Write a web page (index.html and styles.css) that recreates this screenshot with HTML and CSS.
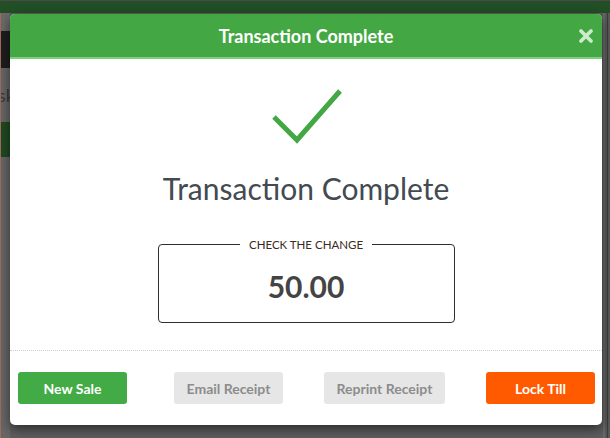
FILE: index.html
```html
<!DOCTYPE html>
<html>
<head>
<meta charset="utf-8">
<link rel="stylesheet" href="styles.css">
</head>
<body>
<div class="page">
  <div class="topbar"></div>
  <div class="side">
    <div class="s s1"></div>
    <div class="s s2"></div>
    <div class="s s3"><span>sk</span></div>
    <div class="s s4"></div>
    <div class="s s5"></div>
  </div>
  <div class="rightbar"></div>
</div>
<div class="overlay">
  <div class="dialog">
    <div class="dlg-head">
      <h1 class="dlg-title">Transaction Complete</h1>
      <svg class="close" width="14" height="14" viewBox="0 0 14 14">
        <path d="M2 2 L12 12 M12 2 L2 12" stroke="#cdeccd" stroke-width="3.6" stroke-linecap="round"/>
      </svg>
    </div>
    <div class="dlg-body">
      <svg class="check" width="72" height="58" viewBox="0 0 72 58">
        <path d="M3 30 L26 53 L69 4" fill="none" stroke="#43a843" stroke-width="5"/>
      </svg>
      <h2 class="done">Transaction Complete</h2>
      <fieldset class="change">
        <legend>CHECK THE CHANGE</legend>
        <div class="amount">50.00</div>
      </fieldset>
    </div>
    <div class="dlg-foot">
      <button class="btn green">New Sale</button>
      <button class="btn grey gap1">Email Receipt</button>
      <button class="btn grey wide gap2">Reprint Receipt</button>
      <button class="btn orange gap2">Lock Till</button>
    </div>
  </div>
</div>
</body>
</html>
```
FILE: styles.css
```css
html, body {
  margin: 0;
  padding: 0;
}
body {
  width: 610px;
  height: 438px;
  overflow: hidden;
  background: #5e5e5e;
  font-family: Lato, "Open Sans", sans-serif;
  position: relative;
}
.page {
  height: 438px;
}
.topbar {
  height: 12px;
  border-top: 1px solid #4a4a4a;
  background: #224f25;
}
.side {
  width: 9px;
  border-left: 1px solid #a36a5c;
  display: flex;
  flex-direction: column;
}
.s { width: 9px; overflow: hidden; }
.s1 { height: 18px; background: #6a6a6a; }
.s2 { height: 37px; background: #1e1e1e; }
.s3 { height: 54px; background: #676767; color: #3a3a3a; font-size: 18px; line-height: 54px; white-space: nowrap; }
.s3 span { display: inline-block; margin-left: -3px; }
.s4 { height: 35px; background: #1f4a21; }
.s5 { height: 300px; background: #676767; }
.rightbar {
  position: absolute;
  top: 13px;
  right: 0;
  width: 7px;
  height: 425px;
  background: #5a5a5a;
  border-left: 2px solid #6a6a6a;
  box-sizing: border-box;
}
.rightbar::after {
  content: "";
  display: block;
  margin-left: 2px;
  width: 1px;
  height: 100%;
  background: #3c3c3c;
}
.overlay {
  position: absolute;
  inset: 0;
  padding: 14px 8px 0 10px;
}
.dialog {
  width: 592px;
  height: 411px;
  background: #fff;
  border-radius: 5px;
  box-shadow: 0 4px 12px rgba(0,0,0,0.55);
  display: flex;
  flex-direction: column;
  overflow: hidden;
}
.dlg-head {
  height: 43px;
  background: #43a843;
  border-bottom: 2px solid #7fcf7f;
  display: flex;
  align-items: center;
  justify-content: center;
  position: relative;
}
.dlg-title {
  margin: 0;
  color: #fff;
  font-size: 18px;
  font-weight: 700;
}
.close {
  position: absolute;
  right: 9px;
  top: 15px;
  display: block;
}
.dlg-body {
  flex: 1;
  display: flex;
  flex-direction: column;
  align-items: center;
  padding-top: 28px;
  border-bottom: 1px dotted #d0d0d0;
}
.check {
  display: block;
  margin-left: 2px;
}
.done {
  margin: 26px 0 0;
  font-size: 30px;
  font-weight: 400;
  color: #434a51;
  line-height: 34px;
}
.change {
  margin: 33px 0 0;
  width: 297px;
  height: 85px;
  box-sizing: border-box;
  border: 1px solid #2e2e2e;
  border-radius: 4px;
  padding: 0;
  text-align: center;
}
.change legend {
  margin: 0 auto;
  padding: 0 9px;
  font-size: 11.5px;
  color: #3a2a20;
}
.amount {
  margin-top: 17px;
  font-size: 30px;
  font-weight: 700;
  color: #444;
  line-height: 36px;
}
.dlg-foot {
  height: 74px;
  box-sizing: border-box;
  padding: 21px 7px 0 8px;
  display: flex;
  align-items: flex-start;
}
.btn {
  width: 109px;
  height: 32px;
  border: none;
  border-radius: 3px;
  font-family: Lato, sans-serif;
  font-size: 14px;
  font-weight: 700;
  padding: 0;
}
.btn.wide { width: 121px; }
.gap1 { margin-left: 47px; }
.gap2 { margin-left: 41px; }
.green { background: #43ab45; color: #fff; }
.grey { background: #e6e6e6; color: #8c8c8c; }
.orange { background: #ff5a00; color: #fff; }
```
